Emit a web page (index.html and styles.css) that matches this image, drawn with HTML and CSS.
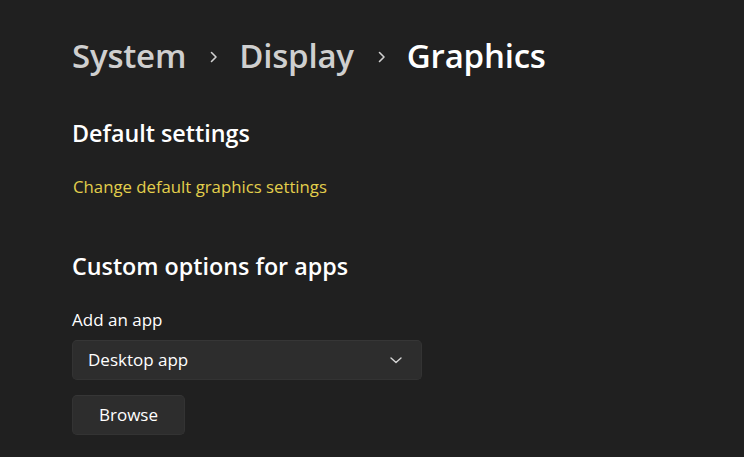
FILE: index.html
```html
<!DOCTYPE html>
<html lang="en">
<head>
<meta charset="utf-8">
<title>Graphics</title>
<link rel="stylesheet" href="styles.css">
</head>
<body>
<main class="page">
  <h1 class="breadcrumb">
    <span class="crumb">System</span>
    <svg class="crumb-sep" width="8" height="12" viewBox="0 0 8 12"><path d="M1.5 1.5 L6 6 L1.5 10.5" fill="none" stroke="currentColor" stroke-width="1.6" stroke-linecap="round" stroke-linejoin="round"/></svg>
    <span class="crumb">Display</span>
    <svg class="crumb-sep" width="8" height="12" viewBox="0 0 8 12"><path d="M1.5 1.5 L6 6 L1.5 10.5" fill="none" stroke="currentColor" stroke-width="1.6" stroke-linecap="round" stroke-linejoin="round"/></svg>
    <span class="crumb current">Graphics</span>
  </h1>

  <h2 class="section-title first">Default settings</h2>
  <a class="link" href="#">Change default graphics settings</a>

  <h2 class="section-title second">Custom options for apps</h2>
  <div class="field-label">Add an app</div>
  <div class="select">
    <span class="select-text">Desktop app</span>
    <svg class="select-chevron" width="12" height="7" viewBox="0 0 12 7"><path d="M1 1 L6 5.5 L11 1" fill="none" stroke="currentColor" stroke-width="1.4" stroke-linecap="round" stroke-linejoin="round"/></svg>
  </div>
  <button class="button">Browse</button>
</main>
</body>
</html>
```

FILE: styles.css
```css
html, body {
  margin: 0;
  padding: 0;
  background: #202020;
  color: #ffffff;
  font-family: "Open Sans", "Noto Sans", sans-serif;
}

.page {
  padding: 33px 0 0 72px;
  display: flex;
  flex-direction: column;
  align-items: flex-start;
}

.breadcrumb {
  margin: 0;
  display: flex;
  align-items: center;
  font-size: 33px;
  line-height: 46px;
  font-weight: 600;
  letter-spacing: -0.2px;
}

.crumb {
  color: #cfcfcf;
}

.crumb.current {
  color: #ffffff;
}

.crumb-sep {
  color: #d0d0d0;
  margin: 0 21px 0 24px;
  position: relative;
  top: 1px;
}

.section-title {
  margin: 0;
  font-size: 23.3px;
  line-height: 32px;
  font-weight: 600;
  color: #ffffff;
}

.section-title.first {
  margin-top: 38px;
}

.section-title.second {
  margin-top: 51px;
}

.link {
  margin-top: 26px;
  margin-left: 1px;
  font-size: 16.75px;
  line-height: 24px;
  color: #e3cf4c;
  text-decoration: none;
}

.field-label {
  margin-top: 26px;
  font-size: 17px;
  line-height: 24px;
  color: #ffffff;
}

.select {
  margin-top: 8px;
  box-sizing: border-box;
  width: 350px;
  height: 40px;
  padding: 8px 20px 8px 15px;
  display: flex;
  align-items: center;
  justify-content: space-between;
  background: #2d2d2d;
  border: 1px solid #333333;
  border-top-color: #363636;
  border-radius: 5px;
}

.select-text {
  font-size: 17px;
  line-height: 24px;
  color: #ffffff;
}

.select-chevron {
  color: #d6d6d6;
  margin-right: -1px;
}

.button {
  margin-top: 15px;
  box-sizing: border-box;
  width: 113px;
  height: 40px;
  padding: 0;
  background: #2d2d2d;
  border: 1px solid #333333;
  border-top-color: #363636;
  border-radius: 5px;
  color: #ffffff;
  font-family: "Open Sans", "Noto Sans", sans-serif;
  font-size: 17px;
  line-height: 24px;
}
```
